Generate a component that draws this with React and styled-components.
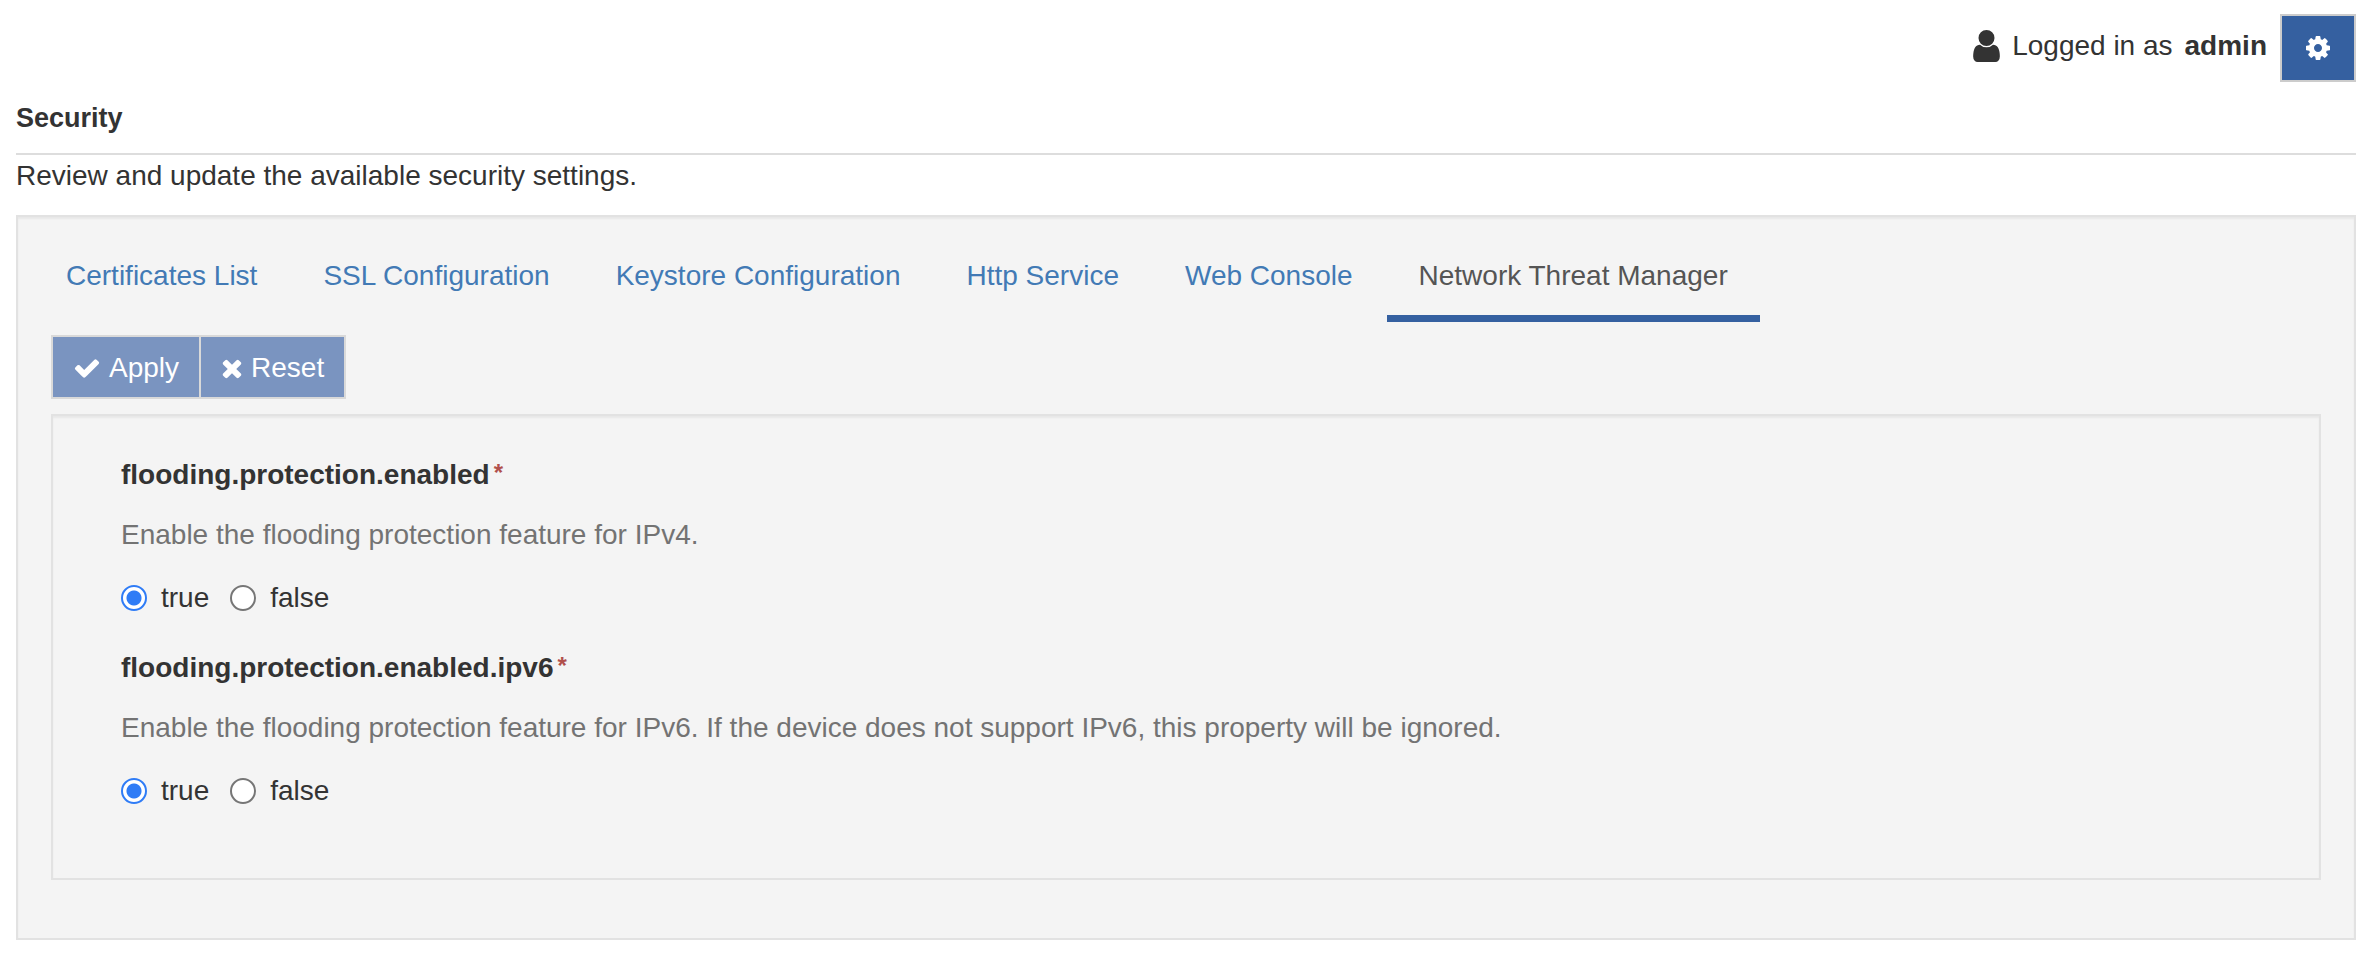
import React, { useState } from "react";
import styled, { createGlobalStyle } from "styled-components";

const GlobalStyle = createGlobalStyle`
  *, *::before, *::after { box-sizing: border-box; }
  body {
    margin: 0;
    background: #fff;
    color: #333;
    font-family: "Helvetica Neue", "Liberation Sans", Arial, sans-serif;
    font-size: 28px;
    line-height: 40px;
  }
  button, input { font: inherit; }
`;

const Page = styled.div`
  padding: 14px 16px 32px;
`;

const Header = styled.header`
  display: flex;
  justify-content: flex-end;
  align-items: flex-start;
  gap: 13px;
`;

const Session = styled.div`
  display: flex;
  align-items: center;
  gap: 12px;
  padding-top: 12px;
`;

const Glyph = styled.svg`
  display: block;
  flex: none;
  width: ${(p) => p.$w}px;
  height: ${(p) => p.$h}px;
  fill: currentColor;
`;

const SettingsButton = styled.button`
  display: grid;
  place-items: center;
  width: 76px;
  height: 68px;
  padding: 0;
  border: 2px solid #ccc;
  background: #3560a0;
  color: #fff;
  cursor: pointer;
`;

const Title = styled.h1`
  margin: 0;
  padding: 16px 0 15px;
  border-bottom: 2px solid #ddd;
  font-size: 27px;
  line-height: 40px;
`;

const Intro = styled.p`
  margin: 0;
  padding: 1px 0 19px;
`;

const Well = styled.section`
  border: 2px solid #e2e2e2;
  background: #f4f4f4;
  box-shadow: inset 0 2px 2px rgba(0, 0, 0, 0.05);
`;

const SettingsWell = styled(Well)`
  padding: 18px 33px 58px;
`;

const FormWell = styled(Well)`
  display: flex;
  flex-direction: column;
  gap: 30px;
  margin-top: 15px;
  padding: 39px 68px 67px;
`;

const Tabs = styled.nav`
  display: flex;
  gap: 2px;
  margin-left: -17px;
`;

const Tab = styled.a`
  padding: 21px 32px 19px;
  border-bottom: 7px solid ${(p) => (p.$active ? "#3560a0" : "transparent")};
  color: ${(p) => (p.$active ? "#555" : "#427ab5")};
  text-decoration: none;
  white-space: nowrap;
`;

const Toolbar = styled.div`
  display: flex;
  margin-top: 13px;
`;

const ToolButton = styled.button`
  display: flex;
  align-items: center;
  gap: 8px;
  height: 64px;
  padding: 2px 20px 0;
  border: 2px solid #d9d9d9;
  background: #7a94c0;
  color: #fff;

  & + & { margin-left: -2px; }
`;

const Field = styled.fieldset`
  margin: 0;
  padding: 0;
  border: 0;
  min-width: 0;
`;

const Legend = styled.legend`
  display: flex;
  gap: 4px;
  padding: 0;
  font-weight: bold;
`;

const Required = styled.span`
  color: #b1504c;
  font-size: 24px;
  line-height: 36px;
`;

const Help = styled.p`
  margin: 20px 0 23px;
  color: #737373;
`;

const Choices = styled.div`
  display: flex;
  gap: 21px;
`;

const Choice = styled.label`
  display: flex;
  align-items: center;
  gap: 14px;
`;

const Radio = styled.input`
  appearance: none;
  width: 26px;
  height: 26px;
  margin: 0;
  border: 2px solid #767676;
  border-radius: 50%;
  background: #fff;

  &:checked {
    border-color: #2f7cf6;
    background: radial-gradient(circle, #2f7cf6 0 7px, #fff 8px);
  }
`;

const UserIcon = () => (
  <Glyph $w={27} $h={32} viewBox="256 128 1280 1536" aria-hidden="true">
    <path d="M1536 1399q0 109-62.5 187t-150.5 78h-854q-88 0-150.5-78t-62.5-187q0-85 8.5-160.5t31.5-152 58.5-131 94-89 134.5-34.5q131 128 313 128t313-128q76 0 134.5 34.5t94 89 58.5 131 31.5 152 8.5 160.5zm-256-887q0 159-112.5 271.5t-271.5 112.5-271.5-112.5-112.5-271.5 112.5-271.5 271.5-112.5 271.5 112.5 112.5 271.5z" />
  </Glyph>
);

const CogIcon = () => (
  <Glyph $w={28} $h={28} viewBox="0 0 1792 1792" aria-hidden="true">
    <path d="M1152 896q0-106-75-181t-181-75-181 75-75 181 75 181 181 75 181-75 75-181zm512-109v222q0 12-8 23t-20 13l-185 28q-19 54-39 91 35 50 107 138 10 12 10 25t-9 23q-27 37-99 108t-94 71q-12 0-26-9l-138-108q-44 23-91 38-16 136-29 186-7 28-36 28h-222q-14 0-24.5-8.5t-11.5-21.5l-28-184q-49-16-90-37l-141 107q-10 9-25 9-14 0-25-11-126-114-165-168-7-10-7-23 0-12 8-23 15-21 51-66.5t54-70.5q-27-50-41-99l-183-27q-13-2-21-12.5t-8-23.5v-222q0-12 8-23t19-13l186-28q14-46 39-92-40-57-107-138-10-12-10-24 0-10 9-23 26-36 98.5-107.5t94.5-71.5q13 0 26 10l138 107q44-23 91-38 16-136 29-186 7-28 36-28h222q14 0 24.5 8.5t11.5 21.5l28 184q49 16 90 37l142-107q9-9 24-9 13 0 25 10 129 119 165 170 7 8 7 22 0 12-8 23-15 21-51 66.5t-54 70.5q26 50 41 98l183 28q13 2 21 12.5t8 23.5z" />
  </Glyph>
);

const CheckIcon = () => (
  <Glyph $w={28} $h={28} viewBox="0 0 1792 1792" aria-hidden="true">
    <path d="M1671 566q0 40-28 68l-724 724-136 136q-28 28-68 28t-68-28l-136-136-362-362q-28-28-28-68t28-68l136-136q28-28 68-28t68 28l294 295 656-657q28-28 68-28t68 28l136 136q28 28 28 68z" />
  </Glyph>
);

const TimesIcon = () => (
  <Glyph $w={22} $h={28} viewBox="192 0 1408 1792" aria-hidden="true">
    <path d="M1490 1322q0 40-28 68l-136 136q-28 28-68 28t-68-28l-294-294-294 294q-28 28-68 28t-68-28l-136-136q-28-28-28-68t28-68l294-294-294-294q-28-28-28-68t28-68l136-136q28-28 68-28t68 28l294 294 294-294q28-28 68-28t68 28l136 136q28 28 28 68t-28 68l-294 294 294 294q28 28 28 68z" />
  </Glyph>
);

const TABS = [
  "Certificates List",
  "SSL Configuration",
  "Keystore Configuration",
  "Http Service",
  "Web Console",
  "Network Threat Manager",
];

const FIELDS = [
  {
    name: "flooding.protection.enabled",
    help: "Enable the flooding protection feature for IPv4.",
  },
  {
    name: "flooding.protection.enabled.ipv6",
    help: "Enable the flooding protection feature for IPv6. If the device does not support IPv6, this property will be ignored.",
  },
];

function BooleanField({ name, help }) {
  const [value, setValue] = useState("true");
  return (
    <Field>
      <Legend>
        {name}
        <Required>*</Required>
      </Legend>
      <Help>{help}</Help>
      <Choices>
        {["true", "false"].map((option) => (
          <Choice key={option}>
            <Radio
              type="radio"
              name={name}
              value={option}
              checked={value === option}
              onChange={() => setValue(option)}
            />
            {option}
          </Choice>
        ))}
      </Choices>
    </Field>
  );
}

export default function App() {
  const [active, setActive] = useState("Network Threat Manager");
  return (
    <>
      <GlobalStyle />
      <Page>
        <Header>
          <Session>
            <UserIcon />
            <span>Logged in as</span>
            <strong>admin</strong>
          </Session>
          <SettingsButton type="button" aria-label="Settings">
            <CogIcon />
          </SettingsButton>
        </Header>
        <Title>Security</Title>
        <Intro>Review and update the available security settings.</Intro>
        <SettingsWell>
          <Tabs>
            {TABS.map((tab) => (
              <Tab
                key={tab}
                href="#"
                $active={tab === active}
                aria-current={tab === active ? "page" : undefined}
                onClick={(e) => {
                  e.preventDefault();
                  setActive(tab);
                }}
              >
                {tab}
              </Tab>
            ))}
          </Tabs>
          <Toolbar>
            <ToolButton type="button" disabled>
              <CheckIcon />
              Apply
            </ToolButton>
            <ToolButton type="button" disabled>
              <TimesIcon />
              Reset
            </ToolButton>
          </Toolbar>
          <FormWell as="form">
            {FIELDS.map((field) => (
              <BooleanField key={field.name} {...field} />
            ))}
          </FormWell>
        </SettingsWell>
      </Page>
    </>
  );
}
